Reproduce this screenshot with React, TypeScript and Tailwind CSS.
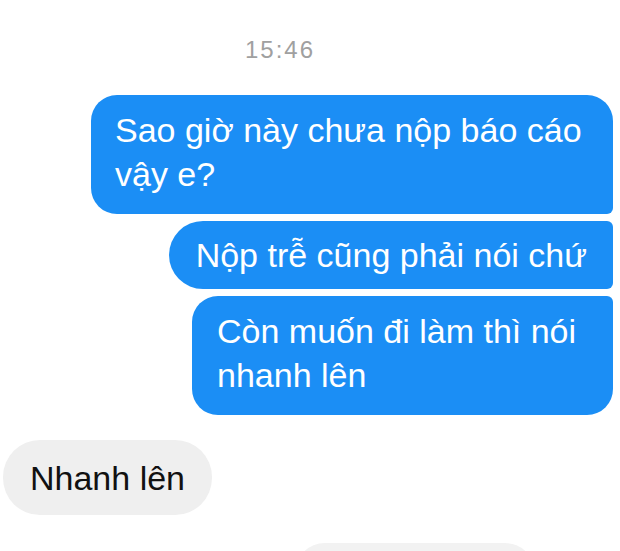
import React from "react";

const App: React.FC = () => {
  return (
    <div
      className="w-[620px] h-[551px] overflow-hidden bg-white"
      style={{ fontFamily: '"Liberation Sans", Arial, sans-serif' }}
    >
      {/* time */}
      <div className="pt-[36px] pr-[60px] text-center text-[24px] leading-[28px] tracking-[2px] text-[#a0a0a0]">
        15:46
      </div>

      {/* sent messages */}
      <div className="mt-[31px] flex flex-col items-end gap-[7px] pr-[7px]">
        <div className="w-[522px] rounded-[26px] rounded-br-[6px] bg-[#1b8ef5] pl-[24px] pr-[20px] pt-[13px] pb-[18px] text-[34px] leading-[44px] text-white">
          Sao giờ này chưa nộp báo cáo vậy e?
        </div>
        <div className="rounded-l-[34px] rounded-r-[6px] bg-[#1b8ef5] pl-[27px] pr-[26px] py-[12px] text-[34px] leading-[44px] text-white">
          Nộp trễ cũng phải nói chứ
        </div>
        <div className="w-[421px] rounded-[26px] rounded-tr-[6px] bg-[#1b8ef5] pl-[25px] pr-[20px] pt-[13px] pb-[18px] text-[34px] leading-[44px] text-white">
          Còn muốn đi làm thì nói nhanh lên
        </div>
      </div>

      {/* received */}
      <div className="mt-[25px] flex pl-[3px]">
        <div className="rounded-[37px] bg-[#efefef] px-[27px] pt-[16px] pb-[15px] text-[34px] leading-[44px] text-[#111]">
          Nhanh lên
        </div>
      </div>

      <div className="mt-[28px] flex pl-[295px]">
        <div className="h-[60px] w-[240px] rounded-[30px] bg-[#f2f2f2]" />
      </div>
    </div>
  );
};

export default App;
